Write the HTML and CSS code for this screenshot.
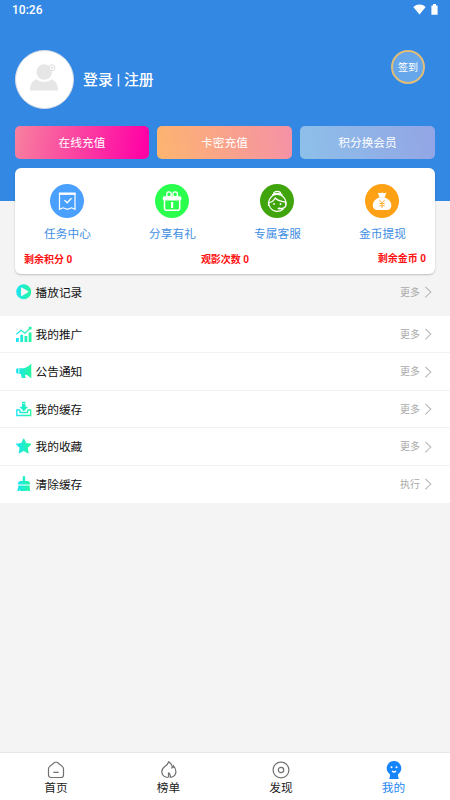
FILE: index.html
```html
<!DOCTYPE html>
<html lang="zh-CN">
<head>
<meta charset="utf-8">
<meta name="viewport" content="width=device-width, initial-scale=1">
<title>我的</title>
<link rel="stylesheet" href="styles.css">
</head>
<body>
<svg class="defs" width="0" height="0" aria-hidden="true">
  <defs>
    <linearGradient id="mint" gradientUnits="userSpaceOnUse" x1="0" y1="0" x2="16" y2="0">
      <stop offset="0" stop-color="#1de3f5"/><stop offset="1" stop-color="#24f99a"/>
    </linearGradient>
  </defs>
</svg>
<div class="app">
  <header class="hero">
    <div class="status">
      <span class="clock">10:26</span>
      <svg class="status-icons" width="28" height="12" viewBox="0 0 28 12" fill="#fff">
        <path d="M.3 3C4-.3 9.200-.3 12.700 3L6.500 10.500Z"/>
        <path d="M20 1.500v-1.500h3v1.500h1.600v9.300h-6.200V1.500Z"/>
      </svg>
    </div>
    <div class="profile">
      <div class="avatar">
        <svg width="28" height="27" viewBox="0 0 28 27">
          <circle cx="14.200" cy="8" r="7.800" fill="#e6e6e6"/>
          <path d="M0 26.500C0 21 2 17.500 5.700 15.300Q14 20.500 22.300 15.300C26 17.500 28 21 28 26.500Z" fill="#e6e6e6"/>
          <circle cx="22" cy="3.700" r="3" fill="#fff" stroke="#e0e0e0" stroke-width="1"/>
          <path d="M22 2v3.400M20.300 3.700h3.400" stroke="#e0e0e0" stroke-width="1"/>
        </svg>
      </div>
      <div class="login">登录 | 注册</div>
      <div class="checkin">签到</div>
    </div>
    <div class="actions">
      <div class="action pink">在线充值</div>
      <div class="action peach">卡密充值</div>
      <div class="action sky">积分换会员</div>
    </div>
  </header>

  <section class="card">
    <div class="features">
      <div class="feature">
        <svg width="34" height="34" viewBox="0 0 34 34">
          <circle cx="17" cy="17" r="17" fill="#4aa0ff"/>
          <path d="M9.500 9.500h15.500v15.800l-3.500-1.500-4.200 1.500-4.300-1.500-3.500 1.500Z" fill="none" stroke="#fff" stroke-width="1.200"/>
          <path d="M8.900 8.500h16.700v2.400H8.900Z" fill="#fff"/>
          <path d="m14.500 16.300 2.700 2.500 4.300-4.500" fill="none" stroke="#fff" stroke-width="1.300"/>
        </svg>
        <span>任务中心</span>
      </div>
      <div class="feature">
        <svg width="34" height="34" viewBox="0 0 34 34">
          <circle cx="17" cy="17" r="17" fill="#2bff4e"/>
          <g fill="none" stroke="#fff" stroke-width="1.300">
            <ellipse cx="14" cy="10.500" rx="2.300" ry="2.700"/><ellipse cx="20.200" cy="10.500" rx="2.300" ry="2.700"/>
            <path d="M9.500 16v8.300q0 2 2 2h11.200q2 0 2-2V16" stroke-width="1.500"/>
          </g>
          <rect x="7.700" y="12.200" width="18.700" height="4.300" rx="1.500" fill="#fff"/>
          <rect x="16" y="18" width="2.200" height="6" rx=".5" fill="#fff"/>
        </svg>
        <span>分享有礼</span>
      </div>
      <div class="feature">
        <svg width="34" height="34" viewBox="0 0 34 34">
          <circle cx="17" cy="17" r="17" fill="#40a50c"/>
          <g fill="none" stroke="#fff" stroke-width="1.200" stroke-linecap="round">
            <path d="M23 25.200a8.500 8.500 0 1 1 2.500-4"/>
            <path d="M13.500 10.500c0-4.300 7.500-4.300 7.500 0M12.500 10.700q4.800-2.500 9.600 0M9.500 18.500c3-.5 4.500-2 5.700-4.500 2.500 3 6.300 3.200 10 4.200M8.500 18v3.500M26 18v3.500q-1.500 3.500-5.500 3"/>
          </g>
          <ellipse cx="19.500" cy="24.500" rx="2" ry="1" fill="#fff"/>
          <circle cx="14" cy="20" r=".9" fill="#fff"/><circle cx="20.500" cy="20" r=".9" fill="#fff"/>
        </svg>
        <span>专属客服</span>
      </div>
      <div class="feature">
        <svg width="34" height="34" viewBox="0 0 34 34">
          <circle cx="17" cy="17" r="17" fill="#ffa114"/>
          <path d="M12.800 8.500q2 1 4.200 0 2.200 1 4.500 0l-2 5h-5Z" fill="#fff"/>
          <path d="M14.500 13.300h5c4 1.500 6.800 4.500 6.800 8.200 0 3.200-2 4.500-5 4.500h-8.500c-3 0-5-1.300-5-4.500 0-3.700 2.700-6.700 6.700-8.200Z" fill="#fff"/>
          <path d="m14.300 16 2.700 3 2.700-3M17 19v5M14.300 19.500h5.400M14.300 21.700h5.400" fill="none" stroke="#ffa114" stroke-width=".8"/>
        </svg>
        <span>金币提现</span>
      </div>
    </div>
    <div class="stats"><span>剩余积分 0</span><span class="views">观影次数 0</span><span class="coins">剩余金币 0</span></div>
  </section>

  <main class="menu">
    <div class="row history">
      <svg width="16" height="16" viewBox="0 0 16 16"><path fill="url(#mint)" fill-rule="evenodd" d="M7.700.3a7.500 7.500 0 1 0 0 15a7.500 7.500 0 0 0 0-15ZM5 4.500q0-1.500 1.300-.8l5.600 3.300q1 .7 0 1.400l-5.600 3.400q-1.300.7-1.300-.8Z"/></svg>
      <span class="label">播放记录</span><span class="more">更多</span><i class="arrow"></i>
    </div>
    <div class="row">
      <svg width="16" height="16" viewBox="0 0 16 16"><path fill="url(#mint)" d="M0 12h2.800v4H0ZM4.300 8.700h2.800V16H4.300ZM8.500 10h2.800v6H8.500ZM12.700 6.500h2.800V16h-2.800Z"/><path d="M.3 8.200 5 4.200l4 3 5-5" fill="none" stroke="url(#mint)" stroke-width="1.200"/><circle cx="14.200" cy="2" r="1.600" fill="url(#mint)"/></svg>
      <span class="label">我的推广</span><span class="more">更多</span><i class="arrow"></i>
    </div>
    <div class="row">
      <svg width="16" height="16" viewBox="0 0 16 16"><path fill="url(#mint)" d="M2.500 5.300v5.400H1.300Q0 10.500 0 8t1.300-2.700ZM3.300 5.200h4.500C11 4.500 13 3 15.300.5v15C13 13.200 11.300 12 9 11.500l.7 3.500H5.800l-.9-4H3.300Z"/></svg>
      <span class="label">公告通知</span><span class="more">更多</span><i class="arrow"></i>
    </div>
    <div class="row">
      <svg width="16" height="16" viewBox="0 0 16 16"><path fill="url(#mint)" d="M6 .8h3.500v1.100H6ZM6 2.600h3.500v3.200h2.700L7.800 10.200 3.300 5.800H6Z"/><path d="M4 9H.8v5.500h13.900V9h-3.200M4 9v2.500h7.500V9" fill="none" stroke="url(#mint)" stroke-width="1.300"/></svg>
      <span class="label">我的缓存</span><span class="more">更多</span><i class="arrow"></i>
    </div>
    <div class="row">
      <svg width="16" height="16" viewBox="0 0 16 16"><path fill="url(#mint)" stroke="url(#mint)" stroke-linejoin="round" d="m7.700.8 2.200 4.700 5.200.7-3.800 3.600.9 5.200-4.500-2.500L3.200 15l.9-5.200L.4 6.200l5.100-.7Z"/></svg>
      <span class="label">我的收藏</span><span class="more">更多</span><i class="arrow"></i>
    </div>
    <div class="row">
      <svg width="16" height="16" viewBox="0 0 16 16"><path fill="url(#mint)" d="M6.700.5q1.300-1 2.500 0V5h3q2 .5 2 3.500H1.800q0-3 2-3.500h2.900ZM2.500 9.500h11l.6 5.500h-2.200l-.7-1.500V15H4l.3-1.500L3 15H1.300Z"/></svg>
      <span class="label">清除缓存</span><span class="more">执行</span><i class="arrow"></i>
    </div>
  </main>

  <nav class="tabs">
    <div class="tab">
      <svg width="18" height="18" viewBox="0 0 18 18" fill="none" stroke="#707070" stroke-width="1.200"><path d="M2.500 5.600 7.500 1.500q1.500-1 3 0l5 4.100q1 .9 1 2.200V14q0 2.500-2.500 2.500H4Q1.500 16.500 1.500 14V7.800q0-1.300 1-2.200ZM6.300 11.300h5.400"/></svg>
      <span>首页</span>
    </div>
    <div class="tab">
      <svg width="18" height="18" viewBox="0 0 18 18" fill="none" stroke="#707070" stroke-width="1.200"><path d="M8 16.500C.5 16 .5 8.500 4.800 5.500 7.500 3.700 8.300 2.500 8.500.9c3 1.500 4 3.500 3.500 6 1-.3 1.500-1 1.500-2 4 4.500 3 11-3.500 11.600M8.500 11.500v5M8.500 11.500q2.700 2.500 1.500 5"/></svg>
      <span>榜单</span>
    </div>
    <div class="tab">
      <svg width="18" height="18" viewBox="0 0 18 18" fill="none" stroke="#707070" stroke-width="1.200"><circle cx="9" cy="9" r="7.900"/><circle cx="9" cy="9" r="2.700"/></svg>
      <span>发现</span>
    </div>
    <div class="tab active">
      <svg width="18" height="18" viewBox="0 0 18 18"><path d="M9 0a7.200 7.200 0 0 1 4 13.200V15l.8 3H4.200L5 15v-1.800A7.200 7.200 0 0 1 9 0Z" fill="#1684fc"/><circle cx="6.500" cy="6.300" r="1" fill="#fff"/><circle cx="11.500" cy="6.300" r="1" fill="#fff"/><path d="M7 10q2 2 4 0" fill="none" stroke="#fff" stroke-width="1.200"/></svg>
      <span>我的</span>
    </div>
  </nav>
</div>
</body>
</html>
```
FILE: styles.css
```css
* { box-sizing: border-box; }
body {
  margin: 0;
  font-family: Roboto, "Noto Sans CJK SC", sans-serif;
  font-size: 11.7px;
  color: #222;
  background: #f4f4f4;
}
.defs { display: block; height: 0; }
.app { height: 800px; display: flex; flex-direction: column; overflow: hidden; }

.hero { height: 201px; flex: none; padding: 0 15px; background: #3388e3; color: #fff; }
.status { height: 20px; margin: 0 -3px; display: flex; align-items: center; justify-content: space-between; font-size: 12px; font-weight: 500; }
.status-icons { margin: -1px -2.500px 0 0; }
.profile { height: 59px; margin-top: 30px; display: flex; align-items: center; }
.avatar { width: 59px; height: 59px; border: 1px solid #d9dee6; border-radius: 50%; background: #fff; display: grid; place-items: center; }
.avatar svg { margin: -4px 1px 0 0; }
.login { margin: 1px 0 0 9px; font-size: 14.9px; line-height: 20px; font-weight: 500; }
.checkin { width: 34px; height: 34px; margin: 0 10px 0 auto; align-self: flex-start; border: 2px solid #e0bd78; border-radius: 50%; background: #66a6eb; font-size: 10px; line-height: 31px; text-align: center; }
.actions { display: grid; grid-template-columns: 134px 135px 135px; gap: 8px; margin-top: 17px; }
.action { height: 33px; border-radius: 5px; line-height: 34px; text-align: center; }
.pink { background: linear-gradient(100deg, #f7819e, #ff03a5 95%); }
.peach { background: linear-gradient(80deg, #fdb56f, #f591a6); }
.sky { background: linear-gradient(80deg, #8dc0e9, #93a5e5); }

.card { height: 106.500px; flex: none; margin: -33.500px 15px 0; padding-top: 16.500px; border-radius: 6px; background: #fff; box-shadow: 0 1px 2px rgba(0, 0, 0, .22); }
.features { display: grid; grid-template-columns: repeat(4, 1fr); }
.feature { display: flex; flex-direction: column; align-items: center; color: #3e8ee2; }
.feature svg { display: block; margin-right: 1px; }
.feature span { margin-top: 8px; line-height: 17px; }
.stats { display: flex; justify-content: space-between; margin-top: 8.500px; padding: 0 9px; font-size: 10px; line-height: 15px; font-weight: 700; color: #ff1111; }
.coins { margin-top: -1px; }

.menu { flex: 1; margin-top: -1.500px; }
.row { height: 37.500px; display: flex; align-items: center; padding: 0 19px 0 15.500px; background: #fff; border-bottom: 1px solid #f3f3f3; color: #111; }
.row:last-child { border-bottom: 0; padding-bottom: 1px; }
.row.history { height: 43px; padding-bottom: 4px; background: none; border: 0; }
.row svg { flex: none; }
.label { margin: -1px 0 0 4px; }
.more { margin: -1px 0 0 auto; font-size: 10px; color: #aaa; }
.arrow { width: 7.500px; height: 7.500px; margin: 0 2px 0 1.500px; border: solid #b4b4b4; border-width: 1px 1px 0 0; transform: rotate(45deg); }

.tabs { height: 47px; flex: none; display: grid; grid-template-columns: repeat(4, 1fr); background: #fff; box-shadow: 0 -1px 1px rgba(0, 0, 0, .05); }
.tab { display: flex; flex-direction: column; align-items: center; padding: 8px .5px 0 0; color: #222; }
.tab svg { display: block; }
.tab span { margin-top: 1px; line-height: 17px; }
.tab.active { color: #2588f3; }
```
